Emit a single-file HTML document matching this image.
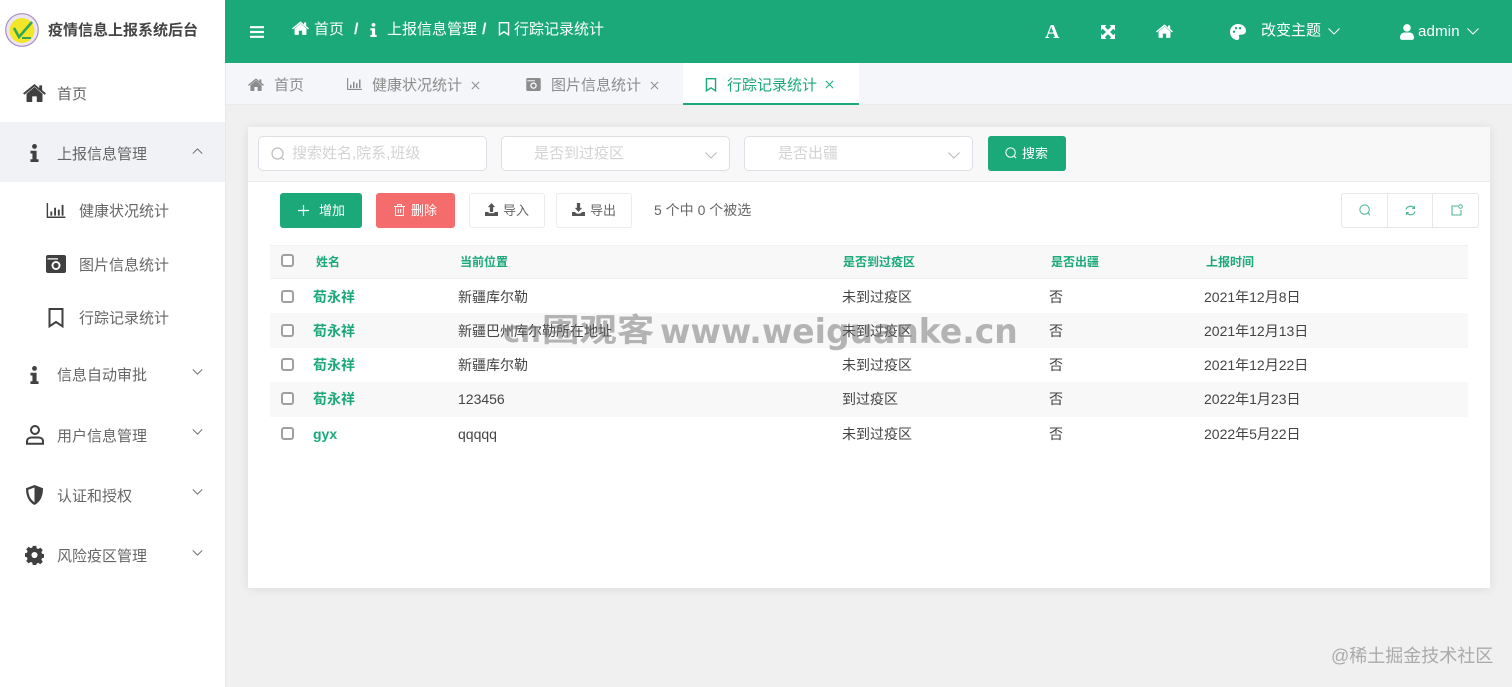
<!DOCTYPE html>
<html lang="zh-CN"><head><meta charset="utf-8"><title>疫情信息上报系统后台</title>
<style>
*{box-sizing:border-box}
html,body{margin:0;width:1512px;height:687px;overflow:hidden;background:#f0f0f0;font-family:"Liberation Sans","Noto Sans CJK SC",sans-serif}
.a,.t,svg.i{position:absolute}
.t{white-space:nowrap;line-height:20px;font-size:15px;color:#666}
.m{color:#666}
.h{color:#fff}
.tb{color:#8c8c8c}
.th{font-size:12px;font-weight:700;color:#1ba97a}
.td{font-size:14px;color:#444}
.n{font-size:14px;font-weight:700;color:#1ba97a}
.cb{position:absolute;left:281px;width:13px;height:13px;border:2px solid #a0a0a0;border-radius:3px;background:#fff}
.inp{position:absolute;top:136px;height:35px;border:1px solid #dcdfe6;border-radius:5px;background:#fff}
.ph{font-size:15px;color:#d3d3d3}
.btn{position:absolute;top:193px;height:35px;border-radius:3px}
.wb{background:#fff;border:1px solid #ececec}
.wm{position:absolute;white-space:nowrap;line-height:40px;font-weight:700;color:rgba(110,110,110,.5);font-family:"DejaVu Sans","Noto Sans CJK SC",sans-serif;transform-origin:0 50%}
</style></head><body>
<svg width="0" height="0" style="position:absolute"><defs>
<symbol id="home" viewBox="0 0 24 20"><path fill="currentColor" d="M12 3.200 3.600 10.200V18c0 .6.400 1 1 1h5v-6h4.800v6h5c.6 0 1-.4 1-1v-7.800z"/><path fill="currentColor" d="M12 0 0 9.800l1.300 1.500L12 2.600l10.700 8.700 1.300-1.500-4-3.300V1.500h-3v2.900z"/></symbol>
<symbol id="info" viewBox="0 0 10 20"><circle cx="5" cy="2.700" r="2.700" fill="currentColor"/><path fill="currentColor" d="M.5 7.500h6.800v9.500H9.500v3H.5v-3h2.200v-6.500H.5z"/></symbol>
<symbol id="book" viewBox="0 0 16 20"><path fill="none" stroke="currentColor" stroke-width="2" d="M1.500 1h13v17.300L8 14l-6.500 4.300z"/></symbol>
<symbol id="chart" viewBox="0 0 20 16"><path fill="none" stroke="currentColor" stroke-width="1.500" d="M.8 0v15.200H20"/><path fill="currentColor" d="M4 9h2v4.500H4zM8 5h2v8.500H8zM12 7h2v6.500h-2zM16 2h2v11.500h-2z"/></symbol>
<symbol id="cam" viewBox="0 0 20 18"><path fill="currentColor" fill-rule="evenodd" d="M2 0h16a2 2 0 0 1 2 2v14a2 2 0 0 1-2 2H2a2 2 0 0 1-2-2V2a2 2 0 0 1 2-2zM1.500 3.200v1.300H12V3.200zM10 6a4.500 4.500 0 1 0 0 9 4.500 4.500 0 0 0 0-9z"/><circle cx="10" cy="10.500" r="2.600" fill="currentColor"/></symbol>
<symbol id="user" viewBox="0 0 18 20"><circle cx="9" cy="5" r="4" fill="none" stroke="currentColor" stroke-width="2"/><path fill="none" stroke="currentColor" stroke-width="2" d="M1 18.800v-2.300c0-2.500 2-4 4.500-4h7c2.500 0 4.500 1.500 4.500 4v2.300z"/></symbol>
<symbol id="ufill" viewBox="0 0 16 18"><circle cx="8" cy="4.300" r="4.300" fill="currentColor"/><path fill="currentColor" d="M0 15.500c0-4 2.500-6 5-6h6c2.500 0 5 2 5 6 0 1.600-1 2.500-2.500 2.500h-11C1 18 0 17.100 0 15.500z"/></symbol>
<symbol id="shield" viewBox="0 0 18 20"><path fill="currentColor" fill-rule="evenodd" d="M9 0 .5 3.200C.5 11 3 16.800 9 20c6-3.200 8.500-9 8.500-16.800zM9 2.500V17.300C5 14.800 3 10.500 2.800 4.800z"/></symbol>
<symbol id="gear" viewBox="0 0 20 20"><path fill="currentColor" fill-rule="evenodd" d="M8 0h4l.5 2.800 1.900.8 2.300-1.600 2.800 2.800-1.600 2.300.8 1.900 2.800.5v4l-2.800.5-.8 1.900 1.600 2.300-2.800 2.800-2.300-1.600-1.900.8L12 22H8l-.5-2.800-1.900-.8-2.300 1.600L.5 17.200l1.600-2.300-.8-1.900L-1.500 12.500v-4l2.800-.5.8-1.900L.5 3.800 3.300 1l2.300 1.600 1.900-.8zM10 7a3.500 3.500 0 1 0 0 7 3.500 3.500 0 0 0 0-7z" transform="translate(.8 .4) scale(.92)"/></symbol>
<symbol id="down" viewBox="0 0 12 7"><path fill="none" stroke="currentColor" stroke-width="1.100" d="M.5.500 6 6l5.500-5.500"/></symbol>
<symbol id="search" viewBox="0 0 14 14"><circle cx="6.500" cy="6.500" r="5.500" fill="none" stroke="currentColor" stroke-width="1.200"/><path stroke="currentColor" stroke-width="1.200" d="m10.500 10.500 2.500 2.500"/></symbol>
<symbol id="x" viewBox="0 0 10 10"><path stroke="currentColor" stroke-width="1.100" d="m1 1 8 8M9 1l-8 8"/></symbol>
<symbol id="up" viewBox="0 0 16 16"><path fill="currentColor" d="M8 0l4.500 5H10v6H6V5H3.500zM0 11h4.500v1.500h7V11H16v5H0z"/></symbol>
<symbol id="dl" viewBox="0 0 16 16"><path fill="currentColor" d="M6 0h4v6h2.500L8 11 3.500 6H6zM0 11h3.500L6 13h4l2.500-2H16v5H0z"/></symbol>
</defs></svg>

<!-- sidebar -->
<div class="a" style="left:0;top:0;width:226px;height:687px;background:#fff;border-right:1px solid #e8e8e8"></div>
<svg class="i" style="left:5px;top:13px" width="34" height="34" viewBox="0 0 34 34"><circle cx="17" cy="17" r="16.300" fill="#ece6f2" stroke="#a78fc0" stroke-width="1.200"/><circle cx="17" cy="17.500" r="12.500" fill="#f2e52a"/><path fill="none" stroke="#35a652" stroke-width="2.600" d="M9 15l5 9 13-15"/><path stroke="#35a652" stroke-width="2" d="M17 25h9"/></svg>
<span class="t" style="left:48px;top:21px;font-weight:700;color:#444">疫情信息上报系统后台</span>
<div class="a" style="left:0;top:122px;width:225px;height:60px;background:#f0f2f5"></div>

<svg class="i" style="left:23px;top:84px;color:#404040" width="23" height="19"><use href="#home"/></svg>
<span class="t m" style="left:57px;top:85px">首页</span>
<svg class="i" style="left:30px;top:143px;color:#404040" width="9" height="20"><use href="#info"/></svg>
<span class="t m" style="left:57px;top:145px">上报信息管理</span>
<svg class="i" style="left:192px;top:148px;color:#666;transform:rotate(180deg)" width="11" height="6"><use href="#down"/></svg>
<svg class="i" style="left:46px;top:203px;color:#404040" width="20" height="15"><use href="#chart"/></svg>
<span class="t m" style="left:79px;top:202px">健康状况统计</span>
<svg class="i" style="left:46px;top:255px;color:#404040" width="20" height="18"><use href="#cam"/></svg>
<span class="t m" style="left:79px;top:256px">图片信息统计</span>
<svg class="i" style="left:48px;top:308px;color:#404040" width="16" height="20"><use href="#book"/></svg>
<span class="t m" style="left:79px;top:309px">行踪记录统计</span>
<svg class="i" style="left:30px;top:365px;color:#404040" width="9" height="20"><use href="#info"/></svg>
<span class="t m" style="left:57px;top:366px">信息自动审批</span>
<svg class="i" style="left:192px;top:369px;color:#666" width="11" height="6"><use href="#down"/></svg>
<svg class="i" style="left:26px;top:425px;color:#404040" width="18" height="20"><use href="#user"/></svg>
<span class="t m" style="left:57px;top:427px">用户信息管理</span>
<svg class="i" style="left:192px;top:429px;color:#666" width="11" height="6"><use href="#down"/></svg>
<svg class="i" style="left:25px;top:485px;color:#404040" width="19" height="20"><use href="#shield"/></svg>
<span class="t m" style="left:57px;top:487px">认证和授权</span>
<svg class="i" style="left:192px;top:489px;color:#666" width="11" height="6"><use href="#down"/></svg>
<svg class="i" style="left:25px;top:545px;color:#404040" width="19" height="20"><use href="#gear"/></svg>
<span class="t m" style="left:57px;top:547px">风险疫区管理</span>
<svg class="i" style="left:192px;top:550px;color:#666" width="11" height="6"><use href="#down"/></svg>

<!-- header -->
<div class="a" style="left:225px;top:0;width:1287px;height:63px;background:#1ba97a"></div>
<svg class="i" style="left:250px;top:26px" width="14" height="12"><path stroke="#fff" stroke-width="2.200" d="M0 1.200h14M0 6h14M0 10.800h14"/></svg>
<svg class="i" style="left:292px;top:21px;color:#fff" width="17" height="15"><use href="#home"/></svg>
<span class="t h" style="left:314px;top:20px">首页</span>
<span class="t h" style="left:354px;top:20px;font-weight:700;font-size:16px">/</span>
<svg class="i" style="left:370px;top:22px;color:#fff" width="7" height="16"><use href="#info"/></svg>
<span class="t h" style="left:387px;top:20px">上报信息管理</span>
<span class="t h" style="left:482px;top:20px;font-weight:700;font-size:16px">/</span>
<svg class="i" style="left:498px;top:22px;color:#fff" width="12" height="14"><use href="#book"/></svg>
<span class="t h" style="left:514px;top:20px">行踪记录统计</span>
<span class="t h" style="left:1045px;top:22px;font:700 20px/20px 'Liberation Serif',serif">A</span>
<svg class="i" style="left:1101px;top:25px" width="14" height="14" viewBox="0 0 14 14"><path fill="#fff" d="M0 0h5.500L3.800 1.700 7 4.900l3.200-3.200L8.500 0H14v5.500l-1.700-1.700L9.100 7l3.200 3.200L14 8.500V14H8.500l1.700-1.700L7 9.100l-3.200 3.200L5.500 14H0V8.500l1.700 1.700L4.900 7 1.700 3.800 0 5.500z"/></svg>
<svg class="i" style="left:1156px;top:24px;color:#fff" width="17" height="15"><use href="#home"/></svg>
<svg class="i" style="left:1230px;top:24px" width="16" height="16" viewBox="0 0 16 16"><path fill="#fff" fill-rule="evenodd" d="M8 0c4.500 0 8 3 8 6.800 0 2.500-2 3.800-4 3.800H10c-1 0-1.500 1-1 1.800.6 1 .3 3.600-1.500 3.600C3.500 16 0 12.500 0 8s3.500-8 8-8zM4 6.500a1.200 1.200 0 1 0 0 2.400 1.200 1.200 0 0 0 0-2.400zM6 3a1.200 1.200 0 1 0 0 2.400A1.200 1.200 0 0 0 6 3zm4 0a1.200 1.200 0 1 0 0 2.400A1.200 1.200 0 0 0 10 3z"/></svg>
<span class="t h" style="left:1261px;top:21px">改变主题</span>
<svg class="i" style="left:1328px;top:28px;color:#fff" width="12" height="7"><use href="#down"/></svg>
<svg class="i" style="left:1400px;top:24px;color:#fff" width="14" height="16"><use href="#ufill"/></svg>
<span class="t h" style="left:1418px;top:22px;font-size:15px;letter-spacing:.2px">admin</span>
<svg class="i" style="left:1467px;top:28px;color:#fff" width="12" height="7"><use href="#down"/></svg>

<!-- tabs -->
<div class="a" style="left:226px;top:63px;width:1286px;height:42px;background:#f5f6fa;border-bottom:1px solid #ebebeb"></div>
<svg class="i" style="left:248px;top:78px;color:#8c8c8c" width="16" height="14"><use href="#home"/></svg>
<span class="t tb" style="left:274px;top:76px">首页</span>
<svg class="i" style="left:347px;top:78px;color:#8c8c8c" width="15" height="12"><use href="#chart"/></svg>
<span class="t tb" style="left:372px;top:76px">健康状况统计</span>
<svg class="i" style="left:471px;top:81px;color:#8c8c8c" width="9" height="9"><use href="#x"/></svg>
<svg class="i" style="left:526px;top:78px;color:#8c8c8c" width="15" height="13"><use href="#cam"/></svg>
<span class="t tb" style="left:551px;top:76px">图片信息统计</span>
<svg class="i" style="left:650px;top:81px;color:#8c8c8c" width="9" height="9"><use href="#x"/></svg>
<div class="a" style="left:683px;top:63px;width:176px;height:42px;background:#fff;border-bottom:2px solid #1ba97a"></div>
<svg class="i" style="left:705px;top:78px;color:#1ba97a" width="12" height="14"><use href="#book"/></svg>
<span class="t" style="left:727px;top:76px;color:#1ba97a">行踪记录统计</span>
<svg class="i" style="left:825px;top:80px;color:#1ba97a" width="9" height="9"><use href="#x"/></svg>

<!-- card -->
<div class="a" style="left:248px;top:127px;width:1242px;height:461px;background:#fff;box-shadow:0 1px 10px rgba(0,0,0,.09)"></div>
<div class="a" style="left:248px;top:127px;width:1242px;height:55px;background:#f8f8f8;border-bottom:1px solid #ececec"></div>
<div class="inp" style="left:258px;width:229px"></div>
<svg class="i" style="left:271px;top:147px;color:#bbb" width="14" height="14"><use href="#search"/></svg>
<span class="t ph" style="left:292px;top:144px">搜索姓名,院系,班级</span>
<div class="inp" style="left:501px;width:229px"></div>
<span class="t ph" style="left:534px;top:144px">是否到过疫区</span>
<svg class="i" style="left:705px;top:152px;color:#bbb" width="12" height="7"><use href="#down"/></svg>
<div class="inp" style="left:744px;width:229px"></div>
<span class="t ph" style="left:778px;top:144px">是否出疆</span>
<svg class="i" style="left:948px;top:152px;color:#bbb" width="12" height="7"><use href="#down"/></svg>
<div class="a" style="left:988px;top:136px;width:78px;height:35px;background:#1ba97a;border-radius:3px"></div>
<svg class="i" style="left:1005px;top:147px;color:#fff" width="12" height="12"><use href="#search"/></svg>
<span class="t h" style="left:1022px;top:144px;font-size:13px">搜索</span>

<div class="btn" style="left:280px;width:82px;background:#1ba97a"></div>
<svg class="i" style="left:298px;top:205px" width="11" height="11"><path stroke="#fff" stroke-width="1.200" d="M5.500 0v11M0 5.500h11"/></svg>
<span class="t h" style="left:319px;top:201px;font-size:13px">增加</span>
<div class="btn" style="left:376px;width:79px;background:#f56c6c"></div>
<svg class="i" style="left:394px;top:204px" width="11" height="12" viewBox="0 0 11 12"><path fill="none" stroke="#fff" stroke-width="1" d="M0 2.500h11M3.500 2.500V.6h4v1.900M1.500 2.500v9h8v-9M4.300 5v4M6.700 5v4"/></svg>
<span class="t h" style="left:411px;top:201px;font-size:13px">删除</span>
<div class="btn wb" style="left:469px;width:76px"></div>
<svg class="i" style="left:485px;top:203px;color:#555" width="13" height="13"><use href="#up"/></svg>
<span class="t" style="left:503px;top:201px;font-size:13px;color:#666">导入</span>
<div class="btn wb" style="left:556px;width:76px"></div>
<svg class="i" style="left:572px;top:203px;color:#555" width="13" height="13"><use href="#dl"/></svg>
<span class="t" style="left:590px;top:201px;font-size:13px;color:#666">导出</span>
<span class="t" style="left:654px;top:200px;font-size:14px;color:#666">5 个中 0 个被选</span>

<div class="a" style="left:1341px;top:193px;width:138px;height:35px;border:1px solid #e6e6e6;border-radius:3px;background:#fff"></div>
<div class="a" style="left:1387px;top:193px;width:1px;height:35px;background:#e6e6e6"></div>
<div class="a" style="left:1432px;top:193px;width:1px;height:35px;background:#e6e6e6"></div>
<svg class="i" style="left:1359px;top:204px;color:#4cb795" width="12" height="12"><use href="#search"/></svg>
<svg class="i" style="left:1405px;top:205px" width="11" height="11" viewBox="0 0 11 11"><path fill="none" stroke="#4cb795" stroke-width="1.100" d="M1 4.500A4.600 4.600 0 0 1 9 3M10 6.500A4.600 4.600 0 0 1 2 8"/><path fill="#4cb795" d="M10 .5V4H6.800zM1 10.500V7h3.200z"/></svg>
<svg class="i" style="left:1451px;top:204px" width="12" height="12" viewBox="0 0 12 12"><path fill="none" stroke="#4cb795" stroke-width="1.100" d="M7 2H1v9h9V6"/><circle cx="9.500" cy="2.500" r="1.800" fill="none" stroke="#4cb795"/></svg>

<!-- table -->
<div class="a" style="left:270px;top:245px;width:1198px;height:34px;background:#f8f8f8;border-top:1px solid #f0f0f0;border-bottom:1px solid #f0f0f0"></div>
<div class="a" style="left:270px;top:313px;width:1198px;height:35px;background:#f8f8f8"></div>
<div class="a" style="left:270px;top:382px;width:1198px;height:35px;background:#f8f8f8"></div>
<div class="cb" style="top:254px"></div>
<span class="t th" style="left:316px;top:252px">姓名</span>
<span class="t th" style="left:460px;top:252px">当前位置</span>
<span class="t th" style="left:843px;top:252px">是否到过疫区</span>
<span class="t th" style="left:1051px;top:252px">是否出疆</span>
<span class="t th" style="left:1206px;top:252px">上报时间</span>

<div class="cb" style="top:290px"></div><span class="t n" style="left:313px;top:287px">荀永祥</span><span class="t td" style="left:458px;top:287px">新疆库尔勒</span><span class="t td" style="left:842px;top:287px">未到过疫区</span><span class="t td" style="left:1049px;top:287px">否</span><span class="t td" style="left:1204px;top:287px">2021年12月8日</span>
<div class="cb" style="top:324px"></div><span class="t n" style="left:313px;top:321px">荀永祥</span><span class="t td" style="left:458px;top:321px">新疆巴州库尔勒所在地址</span><span class="t td" style="left:842px;top:321px">未到过疫区</span><span class="t td" style="left:1049px;top:321px">否</span><span class="t td" style="left:1204px;top:321px">2021年12月13日</span>
<div class="cb" style="top:358px"></div><span class="t n" style="left:313px;top:355px">荀永祥</span><span class="t td" style="left:458px;top:355px">新疆库尔勒</span><span class="t td" style="left:842px;top:355px">未到过疫区</span><span class="t td" style="left:1049px;top:355px">否</span><span class="t td" style="left:1204px;top:355px">2021年12月22日</span>
<div class="cb" style="top:392px"></div><span class="t n" style="left:313px;top:389px">荀永祥</span><span class="t td" style="left:458px;top:389px">123456</span><span class="t td" style="left:842px;top:389px">到过疫区</span><span class="t td" style="left:1049px;top:389px">否</span><span class="t td" style="left:1204px;top:389px">2022年1月23日</span>
<div class="cb" style="top:427px"></div><span class="t n" style="left:313px;top:424px">gyx</span><span class="t td" style="left:458px;top:424px">qqqqq</span><span class="t td" style="left:842px;top:424px">未到过疫区</span><span class="t td" style="left:1049px;top:424px">否</span><span class="t td" style="left:1204px;top:424px">2022年5月22日</span>

<!-- watermarks -->
<span class="wm" style="left:503px;top:312px;font-size:29px">cn</span>
<span class="wm" style="left:542px;top:310px;font-size:32px;transform:scaleX(1.17)">围观客</span>
<span class="wm" style="left:660px;top:312px;font-size:34px;transform:scaleX(.97)">www.weiguanke.cn</span>
<span class="t" style="left:1331px;top:646px;font-size:18px;color:#aaa">@稀土掘金技术社区</span>
</body></html>
